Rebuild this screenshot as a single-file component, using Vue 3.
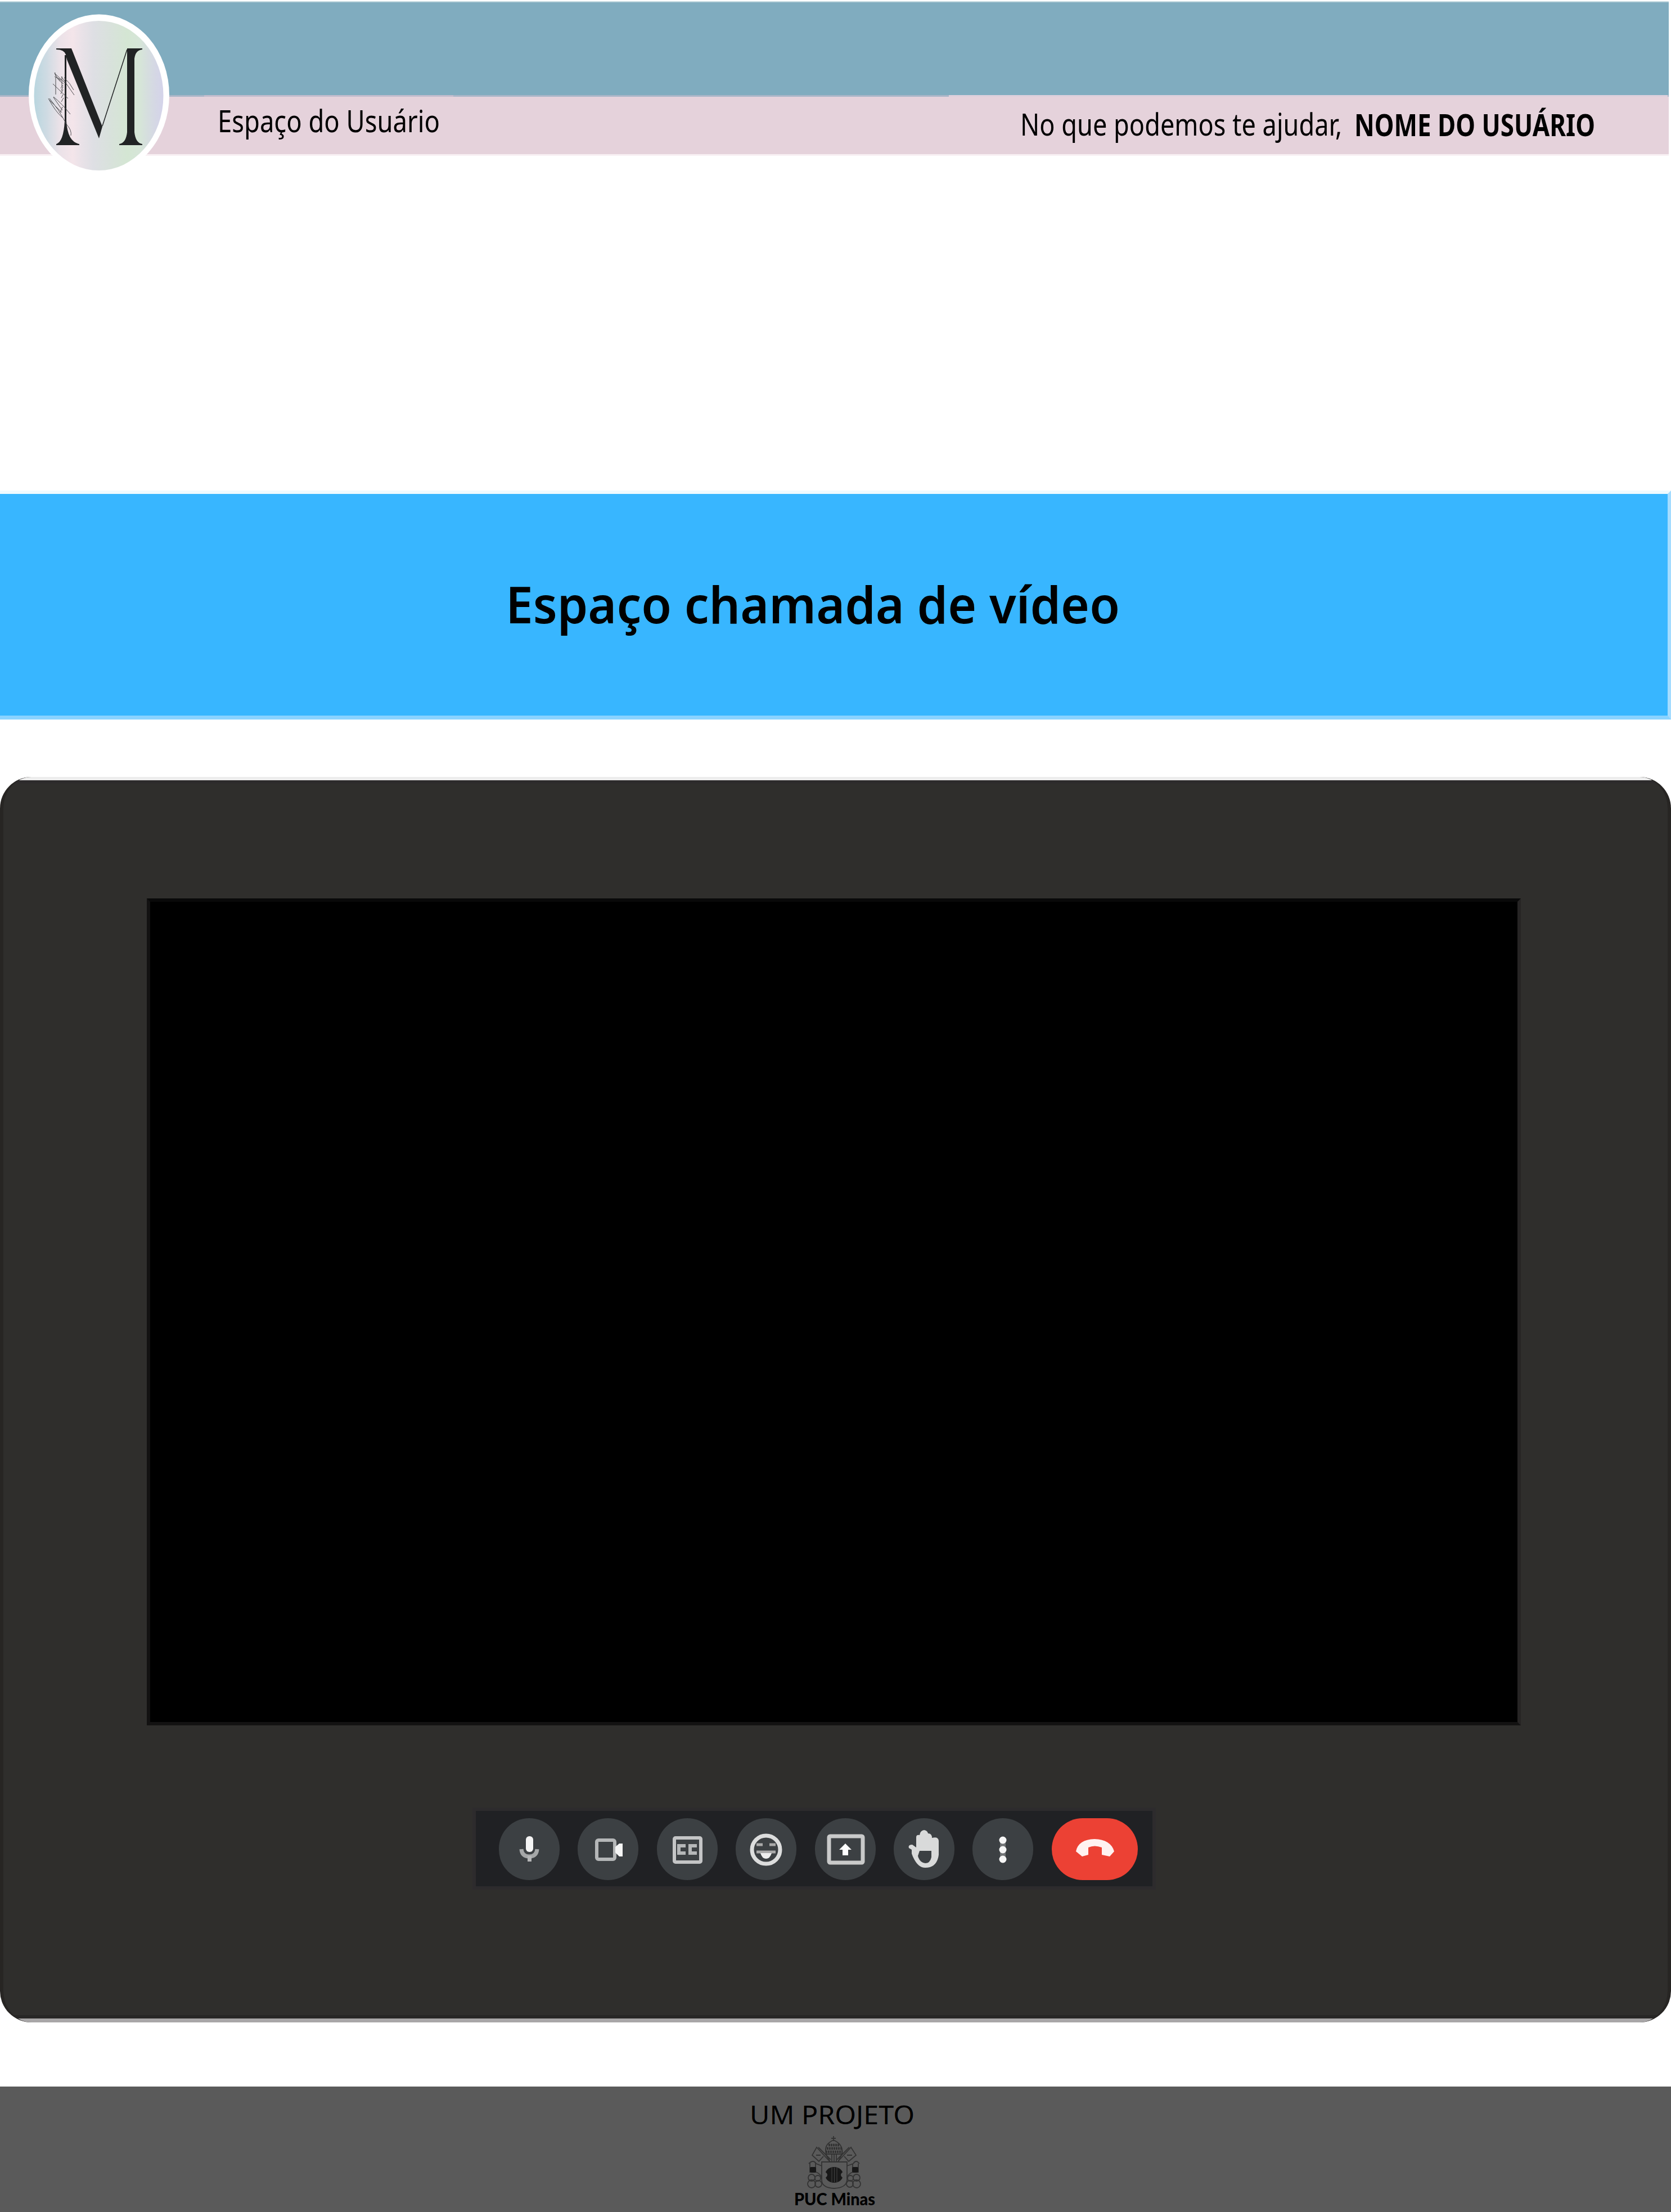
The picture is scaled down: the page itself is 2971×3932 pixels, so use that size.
<script setup>
const controls = ['mic', 'camera', 'captions', 'emoji', 'present', 'hand', 'more']
</script>

<template>
  <main class="page">
    <header class="header">
      <div class="bar-blue"></div>
      <div class="bar-pink">
        <svg class="line" width="2971" height="108" viewBox="0 169 2971 108">
          <rect x="363" y="169" width="443" height="3" fill="#c2bccd" />
          <rect x="1687" y="169" width="1278" height="3" fill="#ddd0dc" />
          <text x="387" y="235" font-size="54" textLength="395" lengthAdjust="spacingAndGlyphs">Espaço do Usuário</text>
          <text x="1814" y="241" font-size="54" textLength="572" lengthAdjust="spacingAndGlyphs">No que podemos te ajudar,</text>
          <text x="2408" y="242" font-size="54" font-weight="700" textLength="428" lengthAdjust="spacingAndGlyphs">NOME DO USUÁRIO</text>
        </svg>
      </div>
      <svg class="logo" width="252" height="282" viewBox="50 24 252 282">
        <defs>
          <linearGradient id="pearl" x1="0" x2="1" y1="0" y2="0">
            <stop offset="0" stop-color="#b9d6df" />
            <stop offset=".1" stop-color="#cfdbe3" />
            <stop offset=".2" stop-color="#ebe2e8" />
            <stop offset=".3" stop-color="#f4e5ea" />
            <stop offset=".37" stop-color="#e9e2e8" />
            <stop offset=".46" stop-color="#dedfe4" />
            <stop offset=".6" stop-color="#d8e2db" />
            <stop offset=".72" stop-color="#d4e6d3" />
            <stop offset=".82" stop-color="#d6e5d8" />
            <stop offset=".93" stop-color="#d5d8e4" />
            <stop offset="1" stop-color="#d4d3ea" />
          </linearGradient>
        </defs>
        <ellipse cx="176" cy="169" rx="125" ry="143.5" fill="#fff" />
        <ellipse cx="175.500" cy="170" rx="115" ry="133" fill="url(#pearl)" />
        <g fill="#212324">
          <path d="M100 86H127L182 225L176 246L119 106L117 97Q114 88 100 88Z" />
          <path d="M115 98H118V215Q120 252 141 256V258H100V256Q113 252 115 215Z" />
          <path d="M226 86H253V88Q241 89 239 104V235Q241 254 253 256V258H212V256Q224 254 226 235Z" />
          <path d="M226 88L182 224" fill="none" stroke="#212324" stroke-width="1.500" />
        </g>
        <g fill="none" stroke="#4d4d50" stroke-width="1">
          <path d="M97 129Q101 142 113 149M98 129Q96 134 108 144M99 132L115 147M97 136L109 142M99 137V168M94 149L121 175M95 172Q110 184 125 203M86 175Q99 199 111 209M88 175L104 196L119 222Q128 232 126 241M88 178L110 200M95 173L111 196M109 136L132 169M114 138Q125 148 131 160M110 136V154M108 157L112 151M109 161L112 154M108 167L112 159M109 174L112 168M109 181L113 174M107 200L111 190" />
        </g>
      </svg>
    </header>

    <section class="banner">
      <svg class="line" width="2971" height="402" viewBox="0 877 2971 402">
        <text x="899" y="1107" font-size="90" font-weight="600" textLength="1092" lengthAdjust="spacingAndGlyphs">Espaço chamada de vídeo</text>
      </svg>
    </section>

    <section class="call">
      <div class="video"></div>
      <div class="toolbar">
        <button v-for="name in controls" :key="name" class="control" :aria-label="name">
          <svg width="108" height="110" viewBox="-54 -55 108 110">
            <g v-if="name === 'mic'" fill="#f4f4f4">
              <rect x="-6" y="-23" width="13" height="28" rx="6" />
              <path d="M-14 0Q-13 13 0 13T14 0" fill="none" stroke="#a5a7a8" stroke-width="7" />
              <rect x="-3" y="12" width="7" height="10" fill="#b5b6b7" />
            </g>
            <g v-else-if="name === 'camera'">
              <rect x="-20" y="-16" width="32" height="34" rx="3" fill="none" stroke="#b5b7b8" stroke-width="6" />
              <path d="M13-4L20-10H26V13H20L13 6Z" fill="#f5f5f5" />
            </g>
            <g v-else-if="name === 'captions'" fill="none" stroke="#c4c5c6" stroke-width="6">
              <rect x="-23" y="-20" width="47" height="43" rx="2" />
              <path d="M-3-6H-15V7H-3M17-6H5V7H17" stroke="#b5b7b8" />
            </g>
            <g v-else-if="name === 'emoji'" fill="none" stroke="#dcdddd" stroke-width="7">
              <ellipse cy="1" rx="25" ry="25" />
              <path d="M-17-8H-6M6-8H17M-17 5H17" stroke="#aaa" stroke-width="5" />
              <path d="M-10 7H10Q7 17 0 17T-10 7Z" fill="#eee" stroke="none" />
            </g>
            <g v-else-if="name === 'present'">
              <rect x="-29" y="-23" width="60" height="47" rx="2" fill="none" stroke="#c9caca" stroke-width="7" />
              <path d="M0-10L11 1H5V11H-5V1H-11Z" fill="#fff" />
            </g>
            <g v-else-if="name === 'hand'">
              <path d="M-22 1L-27-2Q-29-8-21-8L-14-3V-21Q-14-26-8-25Q-7-33 0-34Q6-33 7-28Q14-28 14-20Q25-23 26-15V10Q23 33 2 33Q-13 33-22 8Z" fill="#d9dada" />
              <path d="M-8 3H13V14Q11 25 2 25Q-8 24-11 12Z" fill="#3c4043" />
            </g>
            <g v-else fill="#f6f6f6">
              <rect x="-5" y="-20" width="10" height="40" fill="#707375" />
              <circle cy="-16" r="6.500" />
              <circle cy="1" r="6.500" />
              <circle cy="18" r="6.500" />
            </g>
          </svg>
        </button>
        <button class="hangup" aria-label="hang up">
          <svg width="153" height="110" viewBox="-76 -55 153 110">
            <path d="M-33 4Q-29-17 0-18Q29-17 35 4L27 13L13 10V-3Q0-8-11-3V10L-22 13Z" fill="#fff2f1" />
          </svg>
        </button>
      </div>
    </section>

    <footer class="footer">
      <svg width="400" height="223" viewBox="1280 3709 400 223">
        <text x="1333" y="3776" font-size="46" textLength="293" lengthAdjust="spacingAndGlyphs">UM PROJETO</text>
        <g fill="none" stroke="#333" stroke-width="1.800">
          <path d="M1482 3797V3806M1478 3801H1486M1469 3829Q1464 3812 1482 3804Q1500 3812 1497 3829Z" />
          <path d="M1473 3813H1492M1470 3819H1496M1468 3825H1498" stroke-width="4.500" stroke-dasharray="3 1" />
          <path d="M1468 3829L1476 3843H1490L1497 3829M1479 3829V3843M1483 3829V3843M1487 3829V3843" />
          <path d="M1475 3842L1452 3817L1444 3831L1456 3842L1464 3833M1455 3817L1477 3839M1490 3842L1513 3817L1522 3831L1509 3842L1501 3833M1510 3817L1488 3839M1451 3831H1459M1506 3831H1515" />
          <path d="M1461 3843H1506V3875Q1505 3889 1483 3890Q1461 3889 1461 3875Z" />
          <path d="M1438 3846Q1446 3838 1451 3846L1461 3850M1440 3844V3862M1450 3844V3862M1506 3850L1517 3846Q1522 3838 1528 3846M1516 3846V3862M1526 3846V3862M1451 3861Q1459 3864 1461 3872M1516 3861Q1508 3864 1506 3872" />
          <circle cx="1443" cy="3871" r="6" /><circle cx="1454" cy="3872" r="5" />
          <circle cx="1443" cy="3882" r="7" /><circle cx="1455" cy="3882" r="6" />
          <circle cx="1523" cy="3871" r="6" /><circle cx="1512" cy="3872" r="5" />
          <circle cx="1523" cy="3882" r="7" /><circle cx="1511" cy="3882" r="6" />
        </g>
        <g fill="#181818">
          <rect x="1440" y="3852" width="11" height="10" rx="2" /><rect x="1515" y="3852" width="11" height="10" rx="2" />
          <ellipse cx="1483" cy="3866" rx="16" ry="14" />
        </g>
        <path d="M1479 3853V3879M1483.500 3853V3879M1488 3853V3879" stroke="#444" stroke-width="1" />
        <path d="M1466 3861Q1474 3866 1466 3871ZM1500 3861Q1492 3866 1500 3871Z" fill="#5a5a5a" stroke="#5a5a5a" stroke-width="2" />
        <text class="puc" x="1412" y="3920" font-size="31" font-weight="900" textLength="144" lengthAdjust="spacingAndGlyphs">PUC Minas</text>
      </svg>
    </footer>
  </main>
</template>

<style>
body {
  margin: 0;
  background: #fff;
}
</style>

<style scoped>
.page {
  width: 2971px;
  height: 3932px;
  display: flex;
  flex-direction: column;
  overflow: hidden;
  background: #fff;
  font-family: "Noto Sans", "Open Sans", sans-serif;
}
svg {
  display: block;
}
.header {
  position: relative;
  height: 277px;
  margin-bottom: 595px;
  flex: none;
}
.bar-blue {
  box-sizing: border-box;
  width: 2967px;
  height: 169px;
  border-top: 2px solid #fff;
  background: linear-gradient(#c5d9e0 2px, #80acbf 2px);
}
.bar-pink {
  width: 2967px;
  height: 108px;
  overflow: hidden;
  background: linear-gradient(#a9b6c8 3px, #e5d2db 3px, #e5d2db 105px, #f8f0f3 105px);
}
.logo {
  position: absolute;
  left: 50px;
  top: 24px;
}
.banner {
  box-sizing: border-box;
  height: 407px;
  margin-bottom: 102px;
  flex: none;
  border-top: 6px solid #effaff;
  border-right: 6px solid #a5dcff;
  border-bottom: 7px solid #8ad3ff;
  background: #38b6ff;
  overflow: hidden;
}
.call {
  box-sizing: border-box;
  height: 2214px;
  margin-bottom: 114px;
  padding-top: 210px;
  flex: none;
  display: flex;
  flex-direction: column;
  border: solid #272523;
  border-width: 0 6px;
  border-radius: 56px;
  background: linear-gradient(#ededed 6px, #2d2b2c 6px, #2d2b2c 12px, #2f2e2c 12px, #2f2e2c 2201px, #272625 2201px, #272625 2207px, #a8a6a7 2207px);
  background-origin: border-box;
}
.video {
  box-sizing: border-box;
  width: 2443px;
  height: 1470px;
  margin: 6px 0 152px 255px;
  border: 6px solid #131212;
  border-top-color: #090909;
  border-right-color: #262424;
  background: #000;
}
.toolbar {
  box-sizing: border-box;
  width: 1203px;
  height: 134px;
  margin-left: 840px;
  padding: 13px 26px 11px 41px;
  display: flex;
  gap: 32.400px;
  background: #202124;
  outline: 6px solid #2d2b2d;
}
.control,
.hangup {
  flex: none;
  width: 108px;
  height: 110px;
  padding: 0;
  border: 0;
  border-radius: 55px;
  background: #3c4043;
}
.hangup {
  width: 153px;
  background: #ec4134;
}
.footer {
  height: 223px;
  flex: none;
  box-sizing: border-box;
  padding-left: 1280px;
  background: #5a5a5a;
}
.puc {
  font-family: Lato, sans-serif;
}
</style>
